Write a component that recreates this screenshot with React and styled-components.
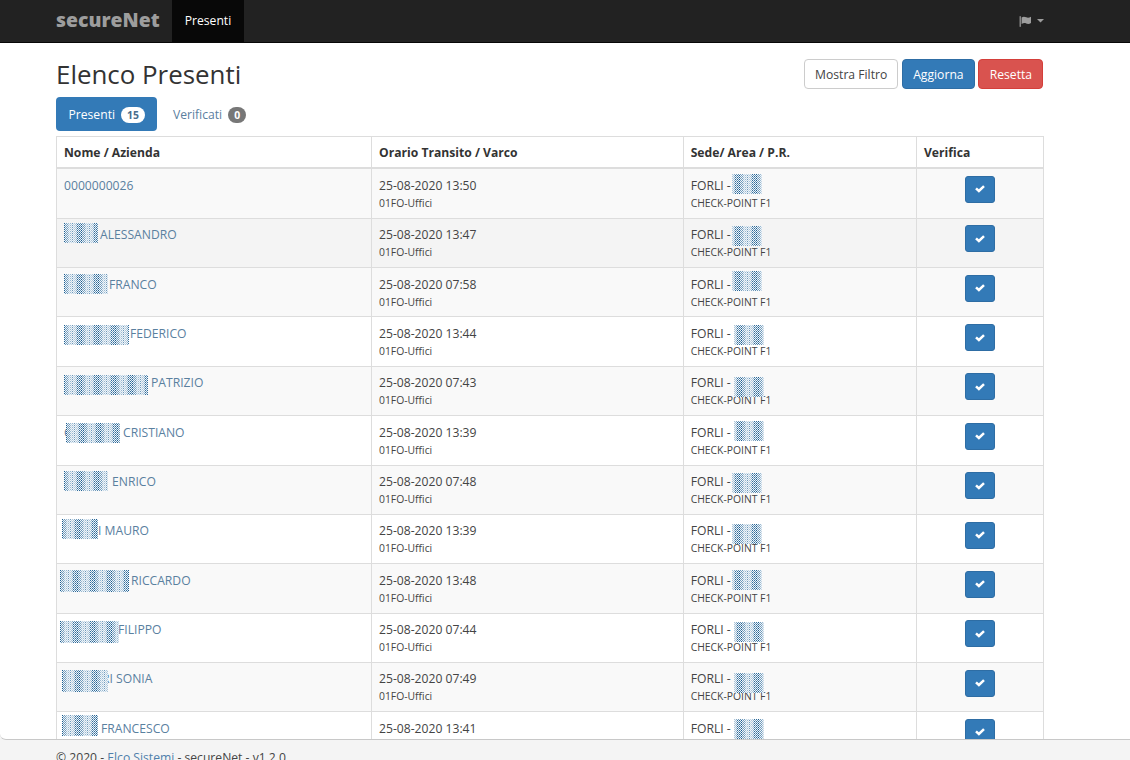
import React from "react";
import styled, { createGlobalStyle } from "styled-components";

const GlobalStyle = createGlobalStyle`
  * {
    box-sizing: border-box;
  }
  body {
    margin: 0;
    background: #fff;
    color: #444;
    font-family: "Open Sans", "Noto Sans", sans-serif;
    font-size: 12.15px;
    line-height: 18px;
  }
`;

const Page = styled.div`
  display: flex;
  flex-direction: column;
  height: 760px;
  overflow: hidden;
  background: #f4f4f4;
`;

const Navbar = styled.nav`
  flex: none;
  display: flex;
  height: 43px;
  padding: 0 86px 0 56px;
  background: #222;
  border-bottom: 1px solid #080808;
`;

const Brand = styled.a`
  width: 116px;
  padding-top: 8px;
  color: #9d9d9d;
  font-size: 19.4px;
  font-weight: 800;
  line-height: 23px;
`;

const NavItem = styled.a`
  width: 72px;
  padding-top: 12px;
  background: #080808;
  color: #fff;
  text-align: center;
`;

const Language = styled.div`
  display: flex;
  align-items: center;
  gap: 5px;
  margin-left: auto;
  color: #9d9d9d;
`;

const Main = styled.main`
  flex: none;
  height: 697px;
  padding: 16px 0 0 56px;
  overflow: hidden;
  background: #fff;
  border-bottom: 1px solid #c8c8c8;
  border-bottom-left-radius: 6px;
`;

const TitleRow = styled.div`
  display: flex;
  justify-content: space-between;
  width: 987.4px;
  height: 38px;
`;

const Title = styled.h1`
  margin: 0;
  color: #333;
  font-size: 25.9px;
  font-weight: 400;
  line-height: 31px;
`;

const Buttons = styled.div`
  display: flex;
  gap: 3.5px;
`;

const Button = styled.button`
  width: ${(p) => p.$width}px;
  height: 30px;
  padding: 1px 0 0;
  border: 1px solid ${(p) => p.$border || "#ccc"};
  border-radius: 4px;
  background: ${(p) => p.$bg || "#fff"};
  color: ${(p) => (p.$bg ? "#fff" : "#444")};
  font: inherit;
`;

const Pills = styled.div`
  display: flex;
  height: 39px;
`;

const Pill = styled.a`
  display: flex;
  align-items: center;
  gap: 6px;
  height: 34px;
  margin-right: 3px;
  padding: 1px 12.5px 0;
  border-radius: 4px;
  background: ${(p) => (p.$active ? "#337ab7" : "transparent")};
  color: ${(p) => (p.$active ? "#fff" : "#5a809f")};
`;

const Badge = styled.span`
  min-width: 18px;
  height: 16px;
  padding: 0 6px;
  border-radius: 8px;
  background: ${(p) => (p.$active ? "#fff" : "#777")};
  color: ${(p) => (p.$active ? "#4a6d8c" : "#fff")};
  font-size: 10.4px;
  font-weight: 700;
  line-height: 16px;
  text-align: center;
`;

const Table = styled.div`
  width: 988px;
  border: solid #ddd;
  border-width: 1px 0 0 1px;
`;

const Row = styled.div`
  display: grid;
  grid-template-columns: 315px 311.7px 233.3px 127px;
  height: 49.36px;
  border-bottom: 1px solid #ddd;
  background: ${(p) => p.$bg};
`;

const Cell = styled.div`
  position: relative;
  padding: 7.4px 7px 0;
  border-right: 1px solid #ddd;
  white-space: nowrap;
`;

const HeadRow = styled(Row)`
  height: 32.4px;
  border-bottom-width: 2px;
  color: #333;
  font-weight: 700;

  ${Cell} {
    padding-top: 7px;
  }
`;

const NameLink = styled.a`
  display: flex;
  color: #5a809f;
`;

const Surname = styled.span`
  flex: none;
  width: ${(p) => p.$width}px;
`;

const Small = styled.div`
  font-size: 10.35px;
  line-height: 17px;
`;

const CheckButton = styled.button`
  display: flex;
  align-items: center;
  justify-content: center;
  width: 30px;
  height: 27px;
  margin: -0.8px auto 0;
  padding: 0;
  border: 1px solid #2e6da4;
  border-radius: 3px;
  background: #337ab7;
  color: #fff;
`;

const Stipple = styled.svg`
  position: absolute;
  left: ${(p) => p.$x}px;
  top: ${(p) => p.$y}px;
`;

const Footer = styled.footer`
  padding: 9px 0 0 56px;
  white-space: nowrap;

  a {
    color: #4f7fab;
  }
`;

function FlagIcon() {
  return (
    <svg width="13" height="11" viewBox="0 0 13 11" fill="currentColor">
      <rect x="0.6" y="0.2" width="1.2" height="10.6" />
      <path d="M2.6 1.4 C4.4 0.3 5.8 0.6 7.2 1.3 C8.8 2 10.3 1.7 12 0.8 V7 C10.3 8.1 8.8 8.2 7.2 7.5 C5.8 6.9 4.4 6.9 2.6 8.1 Z" />
    </svg>
  );
}

function CaretIcon() {
  return (
    <svg width="7" height="4" viewBox="0 0 7 4" fill="currentColor">
      <path d="M0 0 H7 L3.5 3.6 Z" />
    </svg>
  );
}

function CheckIcon() {
  return (
    <svg width="10" height="8" viewBox="0 0 10 8" fill="none" stroke="currentColor" strokeWidth="2.5">
      <path d="M1 3.3 L3.9 6 L9 1.1" />
    </svg>
  );
}

// strength of each dot column, repeated over the mask
const COLUMNS = [1, 0.6, 0.6, 0.6, 0.4, 0.2, 0.4, 0.2, 0.6, 0.2, 0.3, 0.3, 0.5, 0.9, 0.6, 0.9, 0.7];

function Mask({ x, y, width, height = 20, shift = 0 }) {
  const dots = [];
  for (let cx = 0; cx < width; cx++) {
    const opacity = COLUMNS[(cx + shift) % COLUMNS.length];
    for (let cy = cx % 2; cy < height; cy += 2) {
      dots.push(<rect key={cx + "-" + cy} x={cx} y={cy} width="1" height="1" fillOpacity={opacity} />);
    }
  }
  return (
    <Stipple $x={x} $y={y - 0.5} width={width} height={height} fill="#1d5e90" shapeRendering="crispEdges">
      <rect width={width} height={height} fill="#eff5fa" />
      {dots}
    </Stipple>
  );
}

// mask: [x, y, width, height] inside the name cell, area: [x, y] inside the sede cell
const people = [
  { name: "0000000026", indent: 0, time: "13:50", area: [48, 5] },
  { name: "ALESSANDRO", indent: 36, time: "13:47", mask: [7, 5, 34], area: [48, 8] },
  { name: "FRANCO", indent: 45, time: "07:58", mask: [7, 6, 44], area: [48, 3] },
  { name: "FEDERICO", indent: 66, time: "13:44", mask: [7, 8, 65], area: [50, 8] },
  { name: "PATRIZIO", indent: 87, time: "07:43", mask: [7, 9, 84], area: [50, 11] },
  { name: "CRISTIANO", surname: "C", indent: 59, time: "13:39", mask: [9, 7, 54], area: [50, 5] },
  { name: "ENRICO", indent: 48, time: "07:48", mask: [7, 6, 44], area: [48, 8] },
  { name: "I MAURO", indent: 34, time: "13:39", mask: [5, 5, 36], area: [48, 10] },
  { name: "RICCARDO", indent: 67, time: "13:48", mask: [3, 6, 69, 22], area: [48, 6] },
  { name: "FILIPPO", indent: 54, time: "07:44", mask: [3, 8, 59, 22], area: [50, 9] },
  { name: "RI SONIA", indent: 38, time: "07:49", mask: [5, 8, 46, 22], area: [50, 11] },
  { name: "FRANCESCO", indent: 37, time: "13:41", mask: [5, 3, 36, 21], area: [50, 7] },
];

function rowColor(i) {
  if (i === 1) return "#f4f4f4";
  return i % 2 === 0 ? "#f9f9f9" : "#fff";
}

function PersonRow({ person, index }) {
  const { name, surname, indent, time, mask, area } = person;
  return (
    <Row $bg={rowColor(index)}>
      <Cell>
        <NameLink>
          <Surname $width={indent}>{surname}</Surname>
          {name}
        </NameLink>
        {mask && <Mask x={mask[0]} y={mask[1]} width={mask[2]} height={mask[3]} />}
      </Cell>
      <Cell>
        25-08-2020 {time}
        <Small>01FO-Uffici</Small>
      </Cell>
      <Cell>
        FORLI -
        <Small>CHECK-POINT F1</Small>
        <Mask x={area[0]} y={area[1]} width={30} shift={10} />
      </Cell>
      <Cell>
        <CheckButton>
          <CheckIcon />
        </CheckButton>
      </Cell>
    </Row>
  );
}

export default function App() {
  return (
    <Page>
      <GlobalStyle />
      <Navbar>
        <Brand>secureNet</Brand>
        <NavItem>Presenti</NavItem>
        <Language>
          <FlagIcon />
          <CaretIcon />
        </Language>
      </Navbar>
      <Main>
        <TitleRow>
          <Title>Elenco Presenti</Title>
          <Buttons>
            <Button $width={94.5}>Mostra Filtro</Button>
            <Button $width={73} $bg="#337ab7" $border="#2e6da4">Aggiorna</Button>
            <Button $width={65} $bg="#d9534f" $border="#d43f3a">Resetta</Button>
          </Buttons>
        </TitleRow>
        <Pills>
          <Pill $active>
            Presenti <Badge $active>15</Badge>
          </Pill>
          <Pill>
            Verificati <Badge>0</Badge>
          </Pill>
        </Pills>
        <Table>
          <HeadRow $bg="#fff">
            <Cell>Nome / Azienda</Cell>
            <Cell>Orario Transito / Varco</Cell>
            <Cell>Sede/ Area / P.R.</Cell>
            <Cell>Verifica</Cell>
          </HeadRow>
          {people.map((person, i) => (
            <PersonRow key={person.name} person={person} index={i} />
          ))}
        </Table>
      </Main>
      <Footer>
        © 2020 - <a>Elco Sistemi</a> - secureNet - v1.2.0
      </Footer>
    </Page>
  );
}
